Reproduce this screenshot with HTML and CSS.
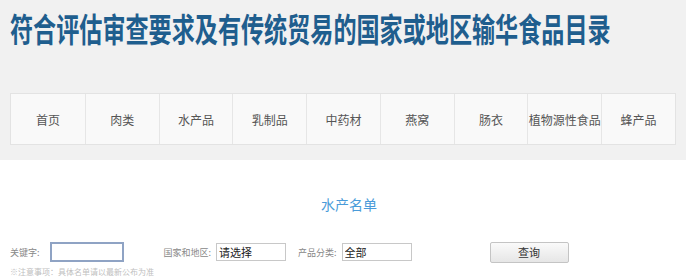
FILE: index.html
```html
<!DOCTYPE html>
<html lang="zh-CN">
<head>
    <meta charset="UTF-8">
    <meta name="viewport" content="width=device-width, initial-scale=1.0">
    <title>输华食品目录</title>
    <link rel="stylesheet" href="styles.css">
</head>
<body>
    <div class="header">
        <h1 class="site-title">符合评估审查要求及有传统贸易的国家或地区输华食品目录</h1>
        <ul class="nav">
            <li>首页</li>
            <li>肉类</li>
            <li>水产品</li>
            <li>乳制品</li>
            <li>中药材</li>
            <li>燕窝</li>
            <li>肠衣</li>
            <li>植物源性食品</li>
            <li>蜂产品</li>
        </ul>
    </div>

    <div class="content">
        <h2 class="list-title">水产名单</h2>
        <div class="search">
            <label class="lbl">关键字:</label>
            <input class="field keyword" type="text">
            <label class="lbl">国家和地区:</label>
            <input class="field pick" type="text" value="请选择">
            <label class="lbl">产品分类:</label>
            <input class="field pick" type="text" value="全部">
            <button class="query">查询</button>
        </div>
        <p class="note">※注意事项：具体名单请以最新公布为准</p>
    </div>
</body>
</html>
```

FILE: styles.css
```css
* {
    margin: 0;
    padding: 0;
    box-sizing: border-box;
}

body {
    background-color: #fff;
    font-family: "Noto Sans CJK SC", "DejaVu Sans", sans-serif;
}

.header {
    background-color: #f1f1f1;
    height: 160px;
    padding: 8px 10px 0 10px;
}

.site-title {
    font-size: 33px;
    line-height: 40px;
    font-weight: bold;
    color: #1f5e8e;
    white-space: nowrap;
    transform: scaleX(0.7);
    transform-origin: left center;
}

.nav {
    list-style: none;
    display: grid;
    grid-template-columns: repeat(9, 1fr);
    margin-top: 45px;
    height: 52px;
    background-color: #f9f9f9;
    border: 1px solid #e3e3e3;
}

.nav li {
    display: flex;
    justify-content: center;
    align-items: center;
    font-size: 12px;
    color: #555;
    white-space: nowrap;
    border-left: 1px solid #e6e6e6;
}

.nav li:first-child {
    border-left: none;
}

.content {
    padding: 0 10px;
}

.list-title {
    text-align: center;
    font-size: 14px;
    font-weight: normal;
    color: #4a9bd9;
    margin-top: 34px;
    margin-left: 12px;
    line-height: 20px;
}

.search {
    display: flex;
    align-items: center;
    margin-top: 27px;
    height: 22px;
}

.lbl {
    font-size: 9px;
    color: #888;
}

.field {
    height: 18px;
    border: 1px solid #c8c8c8;
    font-size: 11px;
    padding: 0 2px;
    color: #222;
    font-family: "Noto Sans CJK SC", sans-serif;
}

.keyword {
    width: 74px;
    height: 20px;
    border: 2px solid #8fa3c4;
    margin-left: 10px;
    margin-right: 40px;
}

.pick {
    width: 70px;
    margin-left: 5px;
    margin-right: 12px;
}

.query {
    margin-left: 66px;
    width: 79px;
    height: 21px;
    font-size: 11px;
    color: #333;
    background: linear-gradient(#fafafa, #e6e6e6);
    border: 1px solid #c4c4c4;
    border-radius: 2px;
    font-family: "Noto Sans CJK SC", sans-serif;
}

.note {
    font-size: 8px;
    line-height: 10px;
    color: #c0c0c0;
    margin-top: 4px;
}
```
